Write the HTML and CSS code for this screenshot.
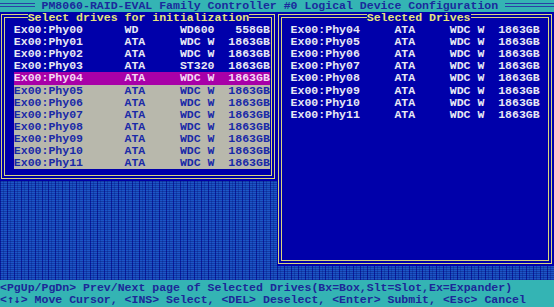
FILE: index.html
```html
<!DOCTYPE html>
<html lang="en">

<head>
    <meta charset="UTF-8">
    <title>PM8060 Logical Device Configuration</title>
    <link rel="stylesheet" href="styles.css">
</head>

<body>
    <div class="screen">
        <header class="titlebar">
            <span class="rule rule-left"></span>
            <h1>PM8060-RAID-EVAL Family Controller #0 Logical Device Configuration</h1>
            <span class="rule rule-right"></span>
        </header>

        <main class="desk">
            <section class="panel panel-source">
                <div class="frame">
                    <h2 class="panel-title">Select drives for initialization</h2>
                    <ul class="drives">
                        <li class="drive"><span>Ex00:Phy00</span><span>WD</span><span>WD600</span><span class="size">558GB</span></li>
                        <li class="drive"><span>Ex00:Phy01</span><span>ATA</span><span>WDC W</span><span class="size">1863GB</span></li>
                        <li class="drive"><span>Ex00:Phy02</span><span>ATA</span><span>WDC W</span><span class="size">1863GB</span></li>
                        <li class="drive"><span>Ex00:Phy03</span><span>ATA</span><span>ST320</span><span class="size">1863GB</span></li>
                        <li class="drive is-current"><span>Ex00:Phy04</span><span>ATA</span><span>WDC W</span><span class="size">1863GB</span></li>
                        <li class="drive is-marked"><span>Ex00:Phy05</span><span>ATA</span><span>WDC W</span><span class="size">1863GB</span></li>
                        <li class="drive is-marked"><span>Ex00:Phy06</span><span>ATA</span><span>WDC W</span><span class="size">1863GB</span></li>
                        <li class="drive is-marked"><span>Ex00:Phy07</span><span>ATA</span><span>WDC W</span><span class="size">1863GB</span></li>
                        <li class="drive is-marked"><span>Ex00:Phy08</span><span>ATA</span><span>WDC W</span><span class="size">1863GB</span></li>
                        <li class="drive is-marked"><span>Ex00:Phy09</span><span>ATA</span><span>WDC W</span><span class="size">1863GB</span></li>
                        <li class="drive is-marked"><span>Ex00:Phy10</span><span>ATA</span><span>WDC W</span><span class="size">1863GB</span></li>
                        <li class="drive is-marked"><span>Ex00:Phy11</span><span>ATA</span><span>WDC W</span><span class="size">1863GB</span></li>
                    </ul>
                </div>
            </section>

            <section class="panel panel-selected">
                <div class="frame">
                    <h2 class="panel-title">Selected Drives</h2>
                    <ul class="drives">
                        <li class="drive"><span>Ex00:Phy04</span><span>ATA</span><span>WDC W</span><span class="size">1863GB</span></li>
                        <li class="drive"><span>Ex00:Phy05</span><span>ATA</span><span>WDC W</span><span class="size">1863GB</span></li>
                        <li class="drive"><span>Ex00:Phy06</span><span>ATA</span><span>WDC W</span><span class="size">1863GB</span></li>
                        <li class="drive"><span>Ex00:Phy07</span><span>ATA</span><span>WDC W</span><span class="size">1863GB</span></li>
                        <li class="drive"><span>Ex00:Phy08</span><span>ATA</span><span>WDC W</span><span class="size">1863GB</span></li>
                        <li class="drive"><span>Ex00:Phy09</span><span>ATA</span><span>WDC W</span><span class="size">1863GB</span></li>
                        <li class="drive"><span>Ex00:Phy10</span><span>ATA</span><span>WDC W</span><span class="size">1863GB</span></li>
                        <li class="drive"><span>Ex00:Phy11</span><span>ATA</span><span>WDC W</span><span class="size">1863GB</span></li>
                    </ul>
                </div>
            </section>
        </main>

        <footer class="keys">
            <p>&lt;PgUp/PgDn&gt; Prev/Next page of Selected Drives(Bx=Box,Slt=Slot,Ex=Expander)</p>
            <p>&lt;<span class="arrows">↑↓</span>&gt; Move Cursor, &lt;INS&gt; Select, &lt;DEL&gt; Deselect, &lt;Enter&gt; Submit, &lt;Esc&gt; Cancel</p>
        </footer>
    </div>
</body>

</html>
```

FILE: styles.css
```css
body {
    margin: 0;
    background: #0000aa;
    font-family: 'Liberation Mono', 'DejaVu Sans Mono', monospace;
    font-size: 11.54px;
    font-weight: bold;
}

.screen {
    width: 80ch;
    height: 307px;
    display: flex;
    flex-direction: column;
    overflow: hidden;
}

/* top bar */
.titlebar {
    height: 12px;
    flex: none;
    display: flex;
    background: #34b4b4;
    color: #1a2a9c;
}

.titlebar h1 {
    margin: 0 1ch;
    font-size: inherit;
    font-weight: inherit;
    line-height: 12px;
    white-space: pre;
}

.rule {
    height: 2px;
    margin-top: 3px;
    border-top: 1px solid #2a40a4;
    border-bottom: 1px solid #2a40a4;
}

.rule-left {
    width: 5ch;
}

.rule-right {
    flex: 1;
}

/* shaded desktop behind the panels */
.desk {
    height: 268px;
    flex: none;
    display: flex;
    align-items: flex-start;
    background:
        repeating-linear-gradient(0deg, rgba(0, 0, 90, 0.3) 0 1px, transparent 1px 2px),
        repeating-linear-gradient(90deg, #0a1ea2 0 1px, #1c56c6 1px 3px, #1242b6 3px 4px, #1c56c6 4px 6.925px);
}

.panel {
    width: 40ch;
    box-sizing: border-box;
    padding: 2px 2px 2px 1px;
    background: #0000aa;
}

.frame {
    border: 4px double #d8d47e;
    padding-bottom: 5.7px;
}

.panel-title {
    width: max-content;
    height: 12.1px;
    margin: -6px 0 0 calc(4ch - 5px);
    font-size: inherit;
    line-height: 12.1px;
    background: #0000aa;
    color: #e8e47c;
}

.panel-selected .panel-title {
    margin-left: calc(13ch - 5px);
}

.drives {
    list-style: none;
    margin: 0 0 0 calc(2ch - 5px);
    padding: 0;
}

.panel-selected .drives {
    min-height: calc(19 * 12.1px);
}

.drive {
    width: 37ch;
    height: 12.1px;
    display: grid;
    grid-template-columns: 16ch 8ch 7ch 6ch;
    line-height: 12.1px;
    color: #e8e8f4;
    white-space: pre;
}

.panel-selected .drive {
    grid-template-columns: 15ch 8ch 7ch 6ch;
}

.size {
    text-align: right;
}

.drive.is-current {
    background: #a800a8;
    color: #f4d8f4;
}

.drive.is-marked {
    background: #b8b8ac;
    color: #1a2aa8;
}

/* key help */
.keys {
    flex: 1;
    padding-top: 2px;
    background: #34b4b4;
    color: #1c2898;
}

.keys p {
    margin: 0;
    line-height: 11.6px;
    white-space: pre;
}

.arrows {
    display: inline-block;
    width: 13.85px;
    font-family: 'DejaVu Sans Mono', monospace;
    font-size: 11px;
    text-align: center;
}
```
